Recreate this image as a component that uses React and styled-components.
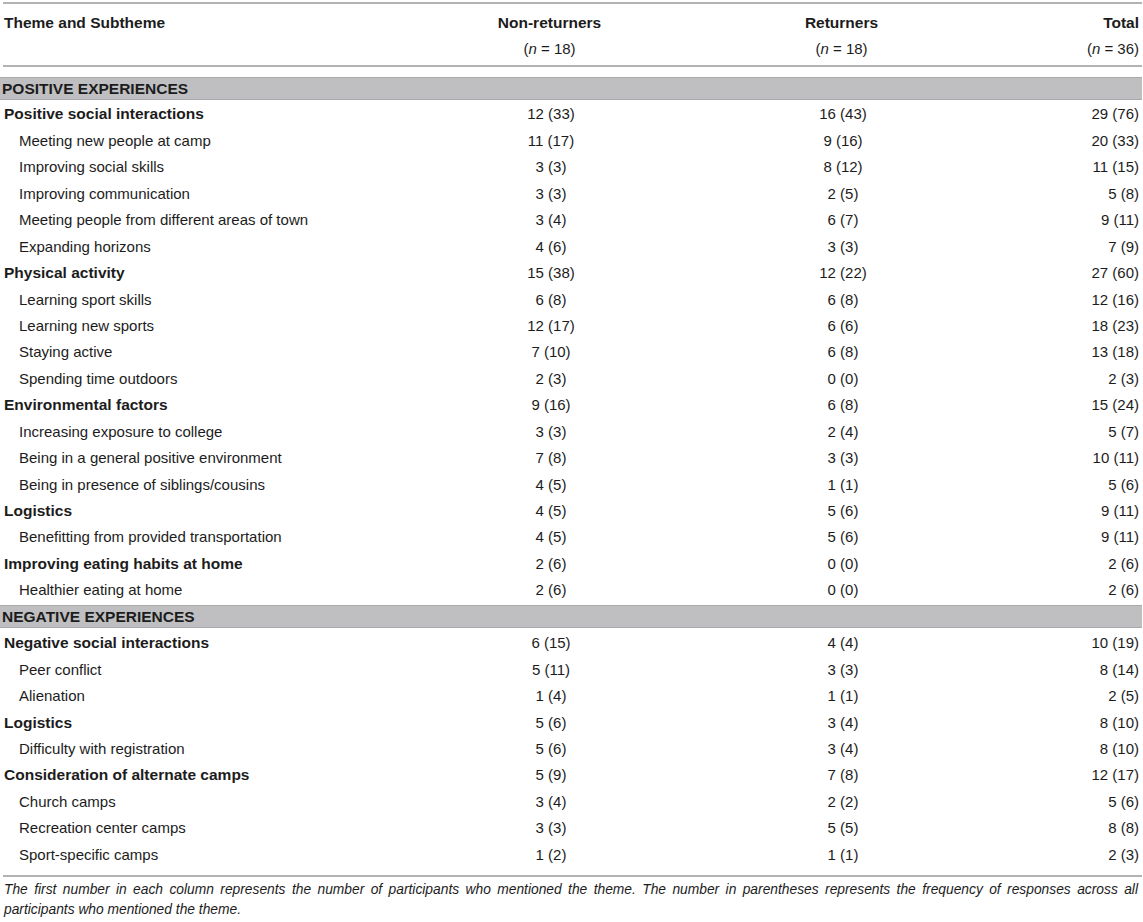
import React from "react";
import styled, { createGlobalStyle } from "styled-components";

const Global = createGlobalStyle`
  html, body { margin: 0; padding: 0; background: #fff; }
  body { font-family: "Liberation Sans", Arial, Helvetica, sans-serif; color: #1c1c1c; }
`;

const Wrap = styled.div`
  width: 1141px;
  padding: 2px 0 0 1px;
`;

const Grid = styled.div`
  display: grid;
  grid-template-columns: 399px 297px 287px 1fr;
  border-top: 2px solid #b3b3b3;
  border-bottom: 2px solid #b3b3b3;
  margin-left: 2px;
  padding-bottom: 6.5px;
`;

const HeadCell = styled.div`
  font-weight: bold;
  font-size: 15.5px;
  line-height: 26px;
  padding: 6px 3px 3px 1px;
  text-align: ${(p) => p.$align || "left"};
  border-bottom: 2px solid #b3b3b3;
  margin-bottom: 8px;
`;

const Sub = styled.span`
  font-weight: normal;
  font-size: 15px;
`;

const Cell = styled.div`
  font-size: ${(p) => (p.$bold ? "15.5px" : "15px")};
  height: 26.45px;
  line-height: 26.45px;
  white-space: nowrap;
  text-align: ${(p) => p.$align || "left"};
  padding-left: ${(p) => (p.$sub ? "16px" : "1px")};
  padding-right: ${(p) => (p.$align === "right" ? "3px" : "0")};
  font-weight: ${(p) => (p.$bold ? "bold" : "normal")};
`;

const Band = styled.div`
  grid-column: 1 / -1;
  height: 26.45px;
  display: flex;
  align-items: center;
`;

const BandInner = styled.div`
  flex: 1;
  height: 21px;
  line-height: 21px;
  background: #bfbfc1;
  border-top: 1px solid #a9a9ab;
  border-bottom: 1px solid #a9a9ab;
  font-weight: bold;
  font-size: 15.5px;
  padding-left: 2px;
  margin-left: -3px;
`;

const Italic = styled.i`
  font-style: italic;
`;

const Foot = styled.p`
  margin: 3px 0 0 3px;
  width: 1134px;
  font-size: 13.8px;
  line-height: 20.5px;
  font-style: italic;
  text-align: justify;
  color: #1c1c1c;
`;

const sections = [
  {
    title: "POSITIVE EXPERIENCES",
    groups: [
      ["Positive social interactions", "12 (33)", "16 (43)", "29 (76)", [
        ["Meeting new people at camp", "11 (17)", "9 (16)", "20 (33)"],
        ["Improving social skills", "3 (3)", "8 (12)", "11 (15)"],
        ["Improving communication", "3 (3)", "2 (5)", "5 (8)"],
        ["Meeting people from different areas of town", "3 (4)", "6 (7)", "9 (11)"],
        ["Expanding horizons", "4 (6)", "3 (3)", "7 (9)"],
      ]],
      ["Physical activity", "15 (38)", "12 (22)", "27 (60)", [
        ["Learning sport skills", "6 (8)", "6 (8)", "12 (16)"],
        ["Learning new sports", "12 (17)", "6 (6)", "18 (23)"],
        ["Staying active", "7 (10)", "6 (8)", "13 (18)"],
        ["Spending time outdoors", "2 (3)", "0 (0)", "2 (3)"],
      ]],
      ["Environmental factors", "9 (16)", "6 (8)", "15 (24)", [
        ["Increasing exposure to college", "3 (3)", "2 (4)", "5 (7)"],
        ["Being in a general positive environment", "7 (8)", "3 (3)", "10 (11)"],
        ["Being in presence of siblings/cousins", "4 (5)", "1 (1)", "5 (6)"],
      ]],
      ["Logistics", "4 (5)", "5 (6)", "9 (11)", [
        ["Benefitting from provided transportation", "4 (5)", "5 (6)", "9 (11)"],
      ]],
      ["Improving eating habits at home", "2 (6)", "0 (0)", "2 (6)", [
        ["Healthier eating at home", "2 (6)", "0 (0)", "2 (6)"],
      ]],
    ],
  },
  {
    title: "NEGATIVE EXPERIENCES",
    groups: [
      ["Negative social interactions", "6 (15)", "4 (4)", "10 (19)", [
        ["Peer conflict", "5 (11)", "3 (3)", "8 (14)"],
        ["Alienation", "1 (4)", "1 (1)", "2 (5)"],
      ]],
      ["Logistics", "5 (6)", "3 (4)", "8 (10)", [
        ["Difficulty with registration", "5 (6)", "3 (4)", "8 (10)"],
      ]],
      ["Consideration of alternate camps", "5 (9)", "7 (8)", "12 (17)", [
        ["Church camps", "3 (4)", "2 (2)", "5 (6)"],
        ["Recreation center camps", "3 (3)", "5 (5)", "8 (8)"],
        ["Sport-specific camps", "1 (2)", "1 (1)", "2 (3)"],
      ]],
    ],
  },
];

function Row({ label, a, b, c, bold }) {
  return (
    <>
      <Cell $bold={bold} $sub={!bold}>{label}</Cell>
      <Cell $align="center">{a}</Cell>
      <Cell $align="center">{b}</Cell>
      <Cell $align="right">{c}</Cell>
    </>
  );
}

export default function App() {
  return (
    <Wrap>
      <Global />
      <Grid>
        <HeadCell>Theme and Subtheme</HeadCell>
        <HeadCell $align="center">
          Non-returners
          <br />
          <Sub>(<Italic>n</Italic> = 18)</Sub>
        </HeadCell>
        <HeadCell $align="center">
          Returners
          <br />
          <Sub>(<Italic>n</Italic> = 18)</Sub>
        </HeadCell>
        <HeadCell $align="right">
          Total
          <br />
          <Sub>(<Italic>n</Italic> = 36)</Sub>
        </HeadCell>
        {sections.map((s) => (
          <React.Fragment key={s.title}>
            <Band>
              <BandInner>{s.title}</BandInner>
            </Band>
            {s.groups.map(([label, a, b, c, subs]) => (
              <React.Fragment key={label + a}>
                <Row label={label} a={a} b={b} c={c} bold />
                {subs.map(([l, x, y, z]) => (
                  <Row key={l} label={l} a={x} b={y} c={z} />
                ))}
              </React.Fragment>
            ))}
          </React.Fragment>
        ))}
      </Grid>
      <Foot>
        The first number in each column represents the number of participants who mentioned the theme. The number in parentheses represents the frequency of responses across all participants who mentioned the theme.
      </Foot>
    </Wrap>
  );
}
